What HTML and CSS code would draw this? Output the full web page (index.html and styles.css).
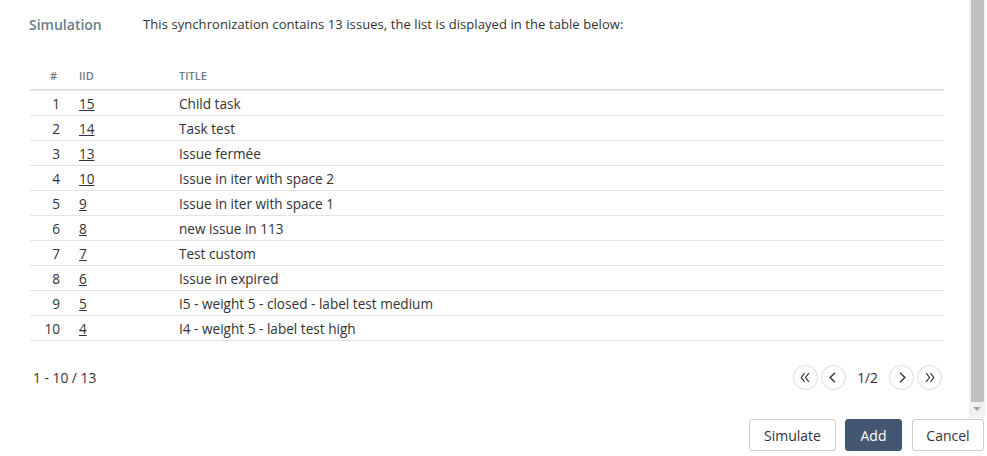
FILE: index.html
```html
<!DOCTYPE html>
<html>
<head>
<meta charset="utf-8">
<link rel="stylesheet" href="styles.css">
</head>
<body>
<div class="dialog">
  <div class="scroll-area">
    <div class="content">
      <div class="intro">
        <div class="section-label">Simulation</div>
        <div class="section-text">This synchronization contains 13 issues, the list is displayed in the table below:</div>
      </div>
      <table class="issues">
        <colgroup><col class="w-num"><col class="w-iid"><col></colgroup>
        <thead>
          <tr><th class="c-num">#</th><th class="c-iid">IID</th><th class="c-title">TITLE</th></tr>
        </thead>
        <tbody>
          <tr><td class="c-num">1</td><td class="c-iid"><a href="#">15</a></td><td class="c-title">Child task</td></tr>
          <tr><td class="c-num">2</td><td class="c-iid"><a href="#">14</a></td><td class="c-title">Task test</td></tr>
          <tr><td class="c-num">3</td><td class="c-iid"><a href="#">13</a></td><td class="c-title">Issue fermée</td></tr>
          <tr><td class="c-num">4</td><td class="c-iid"><a href="#">10</a></td><td class="c-title">Issue in iter with space 2</td></tr>
          <tr><td class="c-num">5</td><td class="c-iid"><a href="#">9</a></td><td class="c-title">Issue in iter with space 1</td></tr>
          <tr><td class="c-num">6</td><td class="c-iid"><a href="#">8</a></td><td class="c-title">new issue in 113</td></tr>
          <tr><td class="c-num">7</td><td class="c-iid"><a href="#">7</a></td><td class="c-title">Test custom</td></tr>
          <tr><td class="c-num">8</td><td class="c-iid"><a href="#">6</a></td><td class="c-title">Issue in expired</td></tr>
          <tr><td class="c-num">9</td><td class="c-iid"><a href="#">5</a></td><td class="c-title">I5 - weight 5 - closed - label test medium</td></tr>
          <tr><td class="c-num">10</td><td class="c-iid"><a href="#">4</a></td><td class="c-title">I4 - weight 5 - label test high</td></tr>
        </tbody>
      </table>
      <div class="pager-row">
        <div class="range">1 - 10 / 13</div>
        <div class="pager">
          <button class="pg" aria-label="First"><svg viewBox="0 0 24 24"><path d="M11 7.5 L7.5 12 L11 16.5 M15.5 7.5 L12 12 L15.5 16.5" fill="none" stroke="#333" stroke-width="1.2"/></svg></button>
          <button class="pg" aria-label="Previous"><svg viewBox="0 0 24 24"><path d="M13.5 7 L8.5 12 L13.5 17" fill="none" stroke="#333" stroke-width="1.4"/></svg></button>
          <span class="page">1/2</span>
          <button class="pg" aria-label="Next"><svg viewBox="0 0 24 24"><path d="M10.5 7 L15.5 12 L10.5 17" fill="none" stroke="#333" stroke-width="1.4"/></svg></button>
          <button class="pg" aria-label="Last"><svg viewBox="0 0 24 24"><path d="M8.5 7.5 L12 12 L8.5 16.5 M13 7.5 L16.5 12 L13 16.5" fill="none" stroke="#333" stroke-width="1.2"/></svg></button>
        </div>
      </div>
    </div>
    <div class="scrollbar">
      <div class="thumb"></div>
      <div class="arrow-down"></div>
    </div>
  </div>
  <div class="actions">
    <button class="btn btn-sim">Simulate</button>
    <button class="btn btn-primary">Add</button>
    <button class="btn btn-cancel">Cancel</button>
  </div>
</div>
</body>
</html>
```

FILE: styles.css
```css
* { box-sizing: border-box; }
html, body { margin: 0; padding: 0; background: #fff; }
body {
  font-family: "Open Sans", "Noto Sans", sans-serif;
  font-size: 13px;
  color: #333;
}
.dialog { width: 987px; height: 456px; display: flex; flex-direction: column; }
.scroll-area { height: 418px; display: flex; width: 985px; }
.content { flex: 1; padding: 14px 24px 0 29px; }
.intro { display: flex; align-items: center; height: 20px; }
.section-label {
  width: 114px;
  font-size: 14px;
  font-weight: 600;
  color: #6b7b8c;
}
.section-text { color: #333; letter-spacing: 0.08px; }
.issues {
  margin-top: 28px;
  margin-left: 1px;
  width: 914px;
  border-collapse: collapse;
  table-layout: fixed;
}
.w-num { width: 31px; }
.w-iid { width: 118px; }
.issues th {
  font-size: 11px;
  font-weight: 600;
  color: #6b7b8c;
  text-align: left;
  height: 28px;
  padding: 0;
  border-bottom: 2px solid #dfe6eb;
}
.issues td {
  height: 25px;
  padding: 0;
  padding-top: 1px;
  font-size: 13.6px;
  border-bottom: 1px solid #dfe6eb;
  vertical-align: middle;
}
.issues .c-num { text-align: right; padding-right: 1px; }
.issues th.c-num { padding-right: 4px; }
.issues .c-iid { padding-left: 18px; }
.issues a { color: #333; text-decoration: underline; }
.pager-row {
  display: flex;
  align-items: center;
  justify-content: space-between;
  margin-top: 24px;
  width: 916px;
  padding-left: 4px;
  padding-right: 3px;
  font-size: 13.8px;
}
.pager { display: flex; align-items: center; gap: 3px; }
.pg {
  width: 25px; height: 25px; padding: 0; border: 1px solid #dcdcdc;
  border-radius: 50%; background: #fff; display: flex; align-items: center; justify-content: center;
}
.pg svg { display: block; width: 23px; height: 23px; }
.page { padding: 0 8px; }
.scrollbar {
  width: 17px; background: #f1f1f1; display: flex; flex-direction: column; align-items: center;
}
.thumb { width: 13px; height: 402px; background: #c1c1c1; }
.arrow-down {
  margin-top: 5px;
  width: 0; height: 0;
  border-left: 4px solid transparent; border-right: 4px solid transparent;
  border-top: 4px solid #a3a3a3;
}
.actions {
  display: flex; justify-content: flex-end; gap: 9px; padding: 1px 3px 0 0;
}
.btn {
  height: 32px; padding: 0; font-family: inherit; font-size: 14px; color: #333;
  background: #fff; border: 1px solid #ccc; border-radius: 3px;
}
.btn-sim { width: 87px; }
.btn-cancel { width: 72px; margin-left: 1px; }
.btn-primary { background: #435672; border-color: #435672; color: #fff; width: 57px; }
```
